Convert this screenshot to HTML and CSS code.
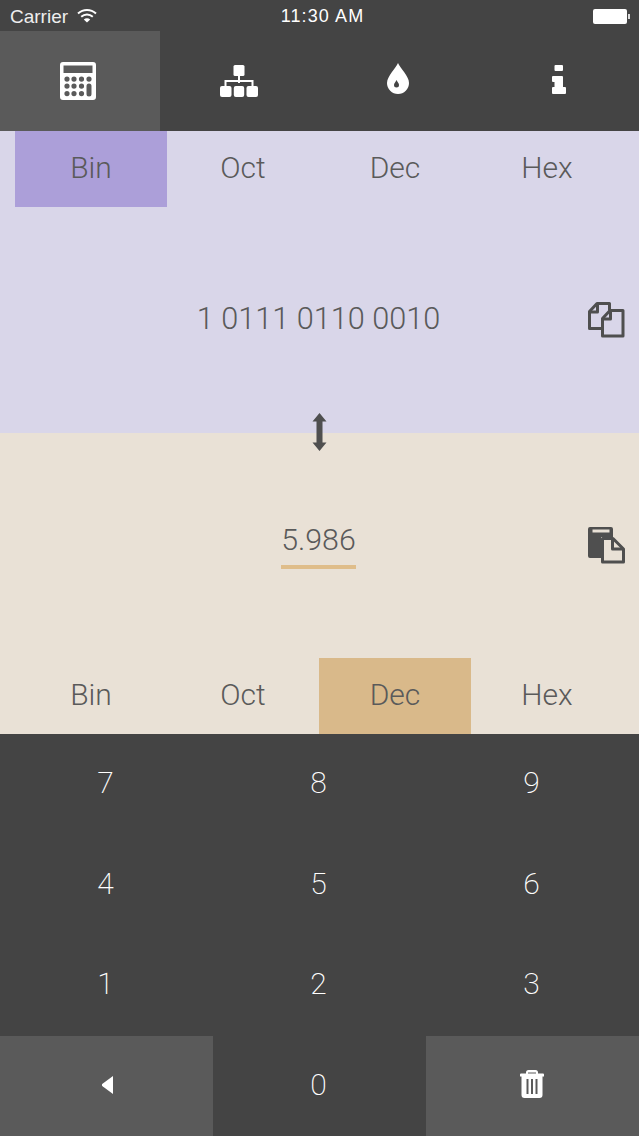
FILE: index.html
```html
<!DOCTYPE html>
<html lang="en">
<head>
    <meta charset="UTF-8">
    <meta name="viewport" content="width=device-width, initial-scale=1.0">
    <title>Converter</title>
    <link rel="stylesheet" href="styles.css">
</head>
<body>
    <div class="app">
        <div class="status-bar">
            <div class="status-left">
                <span>Carrier</span>
                <svg class="wifi" width="20" height="15" viewBox="0 0 20 15">
                    <path d="M1 5.600C6.200 0.800 13.800 0.800 19 5.600" fill="none" stroke="#fff" stroke-width="2"/>
                    <path d="M4.200 8.800C7.600 5.800 12.400 5.800 15.800 8.800" fill="none" stroke="#fff" stroke-width="2"/>
                    <path d="M6.800 11.400C8.700 9.900 11.300 9.900 13.200 11.400L10 14.500Z" fill="#fff"/>
                </svg>
            </div>
            <div class="status-time">11:30 AM</div>
            <div class="status-right">
                <div class="battery"></div>
                <div class="battery-tip"></div>
            </div>
        </div>

        <div class="nav">
            <div class="nav-item active">
                <svg width="36" height="38" viewBox="0 0 36 38">
                    <path fill="#fff" fill-rule="evenodd" d="M3 0H33A3 3 0 0 1 36 3V35A3 3 0 0 1 33 38H3A3 3 0 0 1 0 35V3A3 3 0 0 1 3 0ZM3.500 3.500V11H32.500V3.500ZM7 14.500A2.600 2.600 0 1 0 7 19.700A2.600 2.600 0 1 0 7 14.500ZM14 14.500A2.600 2.600 0 1 0 14 19.700A2.600 2.600 0 1 0 14 14.500ZM21.500 14.500A2.600 2.600 0 1 0 21.500 19.700A2.600 2.600 0 1 0 21.500 14.500ZM29 14.500A2.600 2.600 0 1 0 29 19.700A2.600 2.600 0 1 0 29 14.500ZM7 21.500A2.600 2.600 0 1 0 7 26.700A2.600 2.600 0 1 0 7 21.500ZM14 21.500A2.600 2.600 0 1 0 14 26.700A2.600 2.600 0 1 0 14 21.500ZM21.500 21.500A2.600 2.600 0 1 0 21.500 26.700A2.600 2.600 0 1 0 21.500 21.500ZM29 21.500A2.500 2.500 0 0 0 26.500 24V32A2.500 2.500 0 0 0 31.500 32V24A2.500 2.500 0 0 0 29 21.500ZM7 29A2.600 2.600 0 1 0 7 34.200A2.600 2.600 0 1 0 7 29ZM14 29A2.600 2.600 0 1 0 14 34.200A2.600 2.600 0 1 0 14 29ZM21.500 29A2.600 2.600 0 1 0 21.500 34.200A2.600 2.600 0 1 0 21.500 29Z"/>
                </svg>
            </div>
            <div class="nav-item">
                <svg width="38" height="32" viewBox="0 0 38 32">
                    <rect x="13.500" y="0" width="11" height="11" rx="1.500" fill="#fff"/>
                    <path d="M19 10V18M5.500 22V16H32.500V22" fill="none" stroke="#fff" stroke-width="2"/>
                    <rect x="0" y="21" width="11.500" height="11" rx="2" fill="#fff"/>
                    <rect x="13.800" y="21" width="10.400" height="11" rx="2" fill="#fff"/>
                    <rect x="26.500" y="21" width="11.500" height="11" rx="2" fill="#fff"/>
                </svg>
            </div>
            <div class="nav-item">
                <svg class="drop-icon" width="22" height="31" viewBox="0 0 22 31">
                    <path fill="#fff" fill-rule="evenodd" d="M11 0C13 5 22 13 22 20A11 11 0 0 1 0 20C0 13 9 5 11 0ZM9.500 17C8.500 19 7 20.500 7 22A2.500 2.500 0 0 0 12 22C12 20.500 10.500 19 9.500 17Z"/>
                </svg>
            </div>
            <div class="nav-item">
                <svg class="info-icon" width="14" height="29" viewBox="0 0 14 29">
                    <path fill="#fff" d="M3.500 0H10A1 1 0 0 1 11 1V5A1 1 0 0 1 10 6H3.500A1 1 0 0 1 2.500 5V1A1 1 0 0 1 3.500 0ZM1 11H10A1 1 0 0 1 11 12V22H13A1 1 0 0 1 14 23V28A1 1 0 0 1 13 29H1A1 1 0 0 1 0 28V23A1 1 0 0 1 1 22H2.500V17H1A1 1 0 0 1 0 16V12A1 1 0 0 1 1 11Z"/>
                </svg>
            </div>
        </div>

        <div class="panel panel-from">
            <div class="base-tabs">
                <div class="base-tab selected">Bin</div>
                <div class="base-tab">Oct</div>
                <div class="base-tab">Dec</div>
                <div class="base-tab">Hex</div>
            </div>
            <div class="value-row from-row">
                <span class="value">1 0111 0110 0010</span>
                <svg class="value-icon" width="38" height="36" viewBox="0 0 38 36">
                    <g fill="none" stroke="#4f4f4f" stroke-width="3" stroke-linejoin="round">
                        <path d="M14 26.500H2.500V9.500L10 1.500H22.500V8.500"/>
                        <path d="M2.500 10H10.500V2"/>
                        <path d="M15.500 34V16.500L23 8.500H36V34Z"/>
                        <path d="M15.500 17H23.500V9"/>
                    </g>
                </svg>
            </div>
            <svg class="swap" width="15" height="38" viewBox="0 0 15 38">
                <path fill="#4f4f4f" d="M7.500 0L14.500 8.500H10.500V29.500H14.500L7.500 38L0.500 29.500H4.500V8.500H0.500Z"/>
            </svg>
        </div>

        <div class="panel panel-to">
            <div class="value-row to-row">
                <span class="value typed">5.986</span>
                <svg class="value-icon" width="38" height="38" viewBox="0 0 38 38">
                    <path fill="#4f4f4f" fill-rule="evenodd" d="M3 1H24A2 2 0 0 1 26 3V11H14V32H3A2 2 0 0 1 1 30V3A2 2 0 0 1 3 1ZM5.500 3.500V6.500H22.500V3.500Z"/>
                    <g fill="none" stroke="#4f4f4f" stroke-width="3" stroke-linejoin="round">
                        <path d="M15.500 12.500H26L36.500 23V36H15.500Z"/>
                        <path d="M25.500 13V23H36"/>
                    </g>
                </svg>
            </div>
            <div class="base-tabs">
                <div class="base-tab">Bin</div>
                <div class="base-tab">Oct</div>
                <div class="base-tab selected">Dec</div>
                <div class="base-tab">Hex</div>
            </div>
        </div>

        <div class="keypad">
            <div class="key">7</div>
            <div class="key">8</div>
            <div class="key">9</div>
            <div class="key">4</div>
            <div class="key">5</div>
            <div class="key">6</div>
            <div class="key">1</div>
            <div class="key">2</div>
            <div class="key">3</div>
            <div class="key action">
                <svg class="back-icon" width="11" height="18" viewBox="0 0 11 18">
                    <path fill="#fff" d="M11 0V18L0.500 10.200A1.500 1.500 0 0 1 0.500 7.800Z"/>
                </svg>
            </div>
            <div class="key">0</div>
            <div class="key action">
                <svg width="24" height="28" viewBox="0 0 24 28">
                    <path fill="#fff" fill-rule="evenodd" d="M8.500 0H15.500A2.500 2.500 0 0 1 18 2.500V3.500H23A1 1 0 0 1 24 4.500V6.500H22.500V25A3 3 0 0 1 19.500 28H4.500A3 3 0 0 1 1.500 25V6.500H0V4.500A1 1 0 0 1 1 3.500H6V2.500A2.500 2.500 0 0 1 8.500 0ZM8 2.500V3.500H16V2.500ZM6.500 9V24H8.500V9ZM11 9V24H13V9ZM15.500 9V24H17.500V9Z"/>
                </svg>
            </div>
        </div>
    </div>
</body>
</html>
```

FILE: styles.css
```css
html, body {
    margin: 0;
    padding: 0;
}
body {
    font-family: Roboto, "Liberation Sans", sans-serif;
    background-color: #444;
}
.app {
    width: 639px;
    height: 1136px;
    display: flex;
    flex-direction: column;
    overflow: hidden;
}
.status-bar {
    height: 31px;
    padding: 2px 12px 0 10px;
    box-sizing: border-box;
    display: grid;
    grid-template-columns: 1fr auto 1fr;
    align-items: center;
    background-color: #444;
    color: #fff;
    font-family: "Liberation Sans", Arial, sans-serif;
    font-size: 19px;
}
.status-left {
    display: flex;
    align-items: center;
    gap: 9px;
    color: #eee;
}
.wifi {
    margin-top: -3px;
}
.status-time {
    margin-left: 8px;
    font-size: 18px;
    letter-spacing: 1.1px;
}
.status-right {
    display: flex;
    justify-content: flex-end;
    align-items: center;
    gap: 1px;
}
.battery {
    width: 34px;
    height: 15px;
    background-color: #fff;
    border-radius: 2px;
}
.battery-tip {
    width: 2px;
    height: 5px;
    background-color: #ddd;
    margin-right: -3px;
}
.nav {
    height: 100px;
    display: grid;
    grid-template-columns: 160px 157px 162px 160px;
    background-color: #444;
}
.nav-item {
    display: flex;
    align-items: center;
    justify-content: center;
}
.nav-item.active {
    background-color: #5a5a5a;
    padding-right: 5px;
}
.drop-icon {
    margin-top: -5px;
}
.info-icon {
    margin-top: -3px;
}
.panel {
    position: relative;
    height: 301.5px;
    display: flex;
    flex-direction: column;
}
.panel-from {
    background-color: #d9d6e9;
}
.panel-to {
    background-color: #e9e1d6;
}
.base-tabs {
    height: 76px;
    flex: none;
    padding: 0 15px;
    display: grid;
    grid-template-columns: repeat(4, 152px);
}
.base-tab {
    display: flex;
    align-items: center;
    justify-content: center;
    padding-bottom: 3px;
    font-size: 30px;
    font-weight: 300;
    color: #5a5a5a;
}
.panel-from .selected {
    background-color: #ac9fd9;
}
.panel-to .selected {
    background-color: #d9b98a;
}
.value-row {
    position: relative;
    flex: 1;
    display: flex;
    align-items: center;
    justify-content: center;
    padding-right: 2px;
}
.from-row {
    padding-bottom: 3px;
}
.value {
    font-size: 30.700px;
    font-weight: 300;
    color: #5a5a5a;
}
.typed {
    padding: 0 0 8px;
    font-size: 30.300px;
    border-bottom: 4px solid #dfbd8a;
}
.value-icon {
    position: absolute;
    right: 14px;
    top: 50%;
    transform: translateY(-50%);
}
.swap {
    position: absolute;
    left: 311.500px;
    bottom: -18px;
    z-index: 1;
}
.keypad {
    flex: 1;
    display: grid;
    grid-template-columns: 213px 213px 213px;
    grid-template-rows: repeat(4, 1fr);
    background-color: #444;
}
.key {
    display: flex;
    align-items: center;
    justify-content: center;
    padding: 0 2px 3px 0;
    font-size: 30px;
    font-weight: 200;
    color: #fff;
}
.key.action {
    background-color: #5a5a5a;
}
.back-icon {
    margin: 2px 0 0 4px;
}
```
